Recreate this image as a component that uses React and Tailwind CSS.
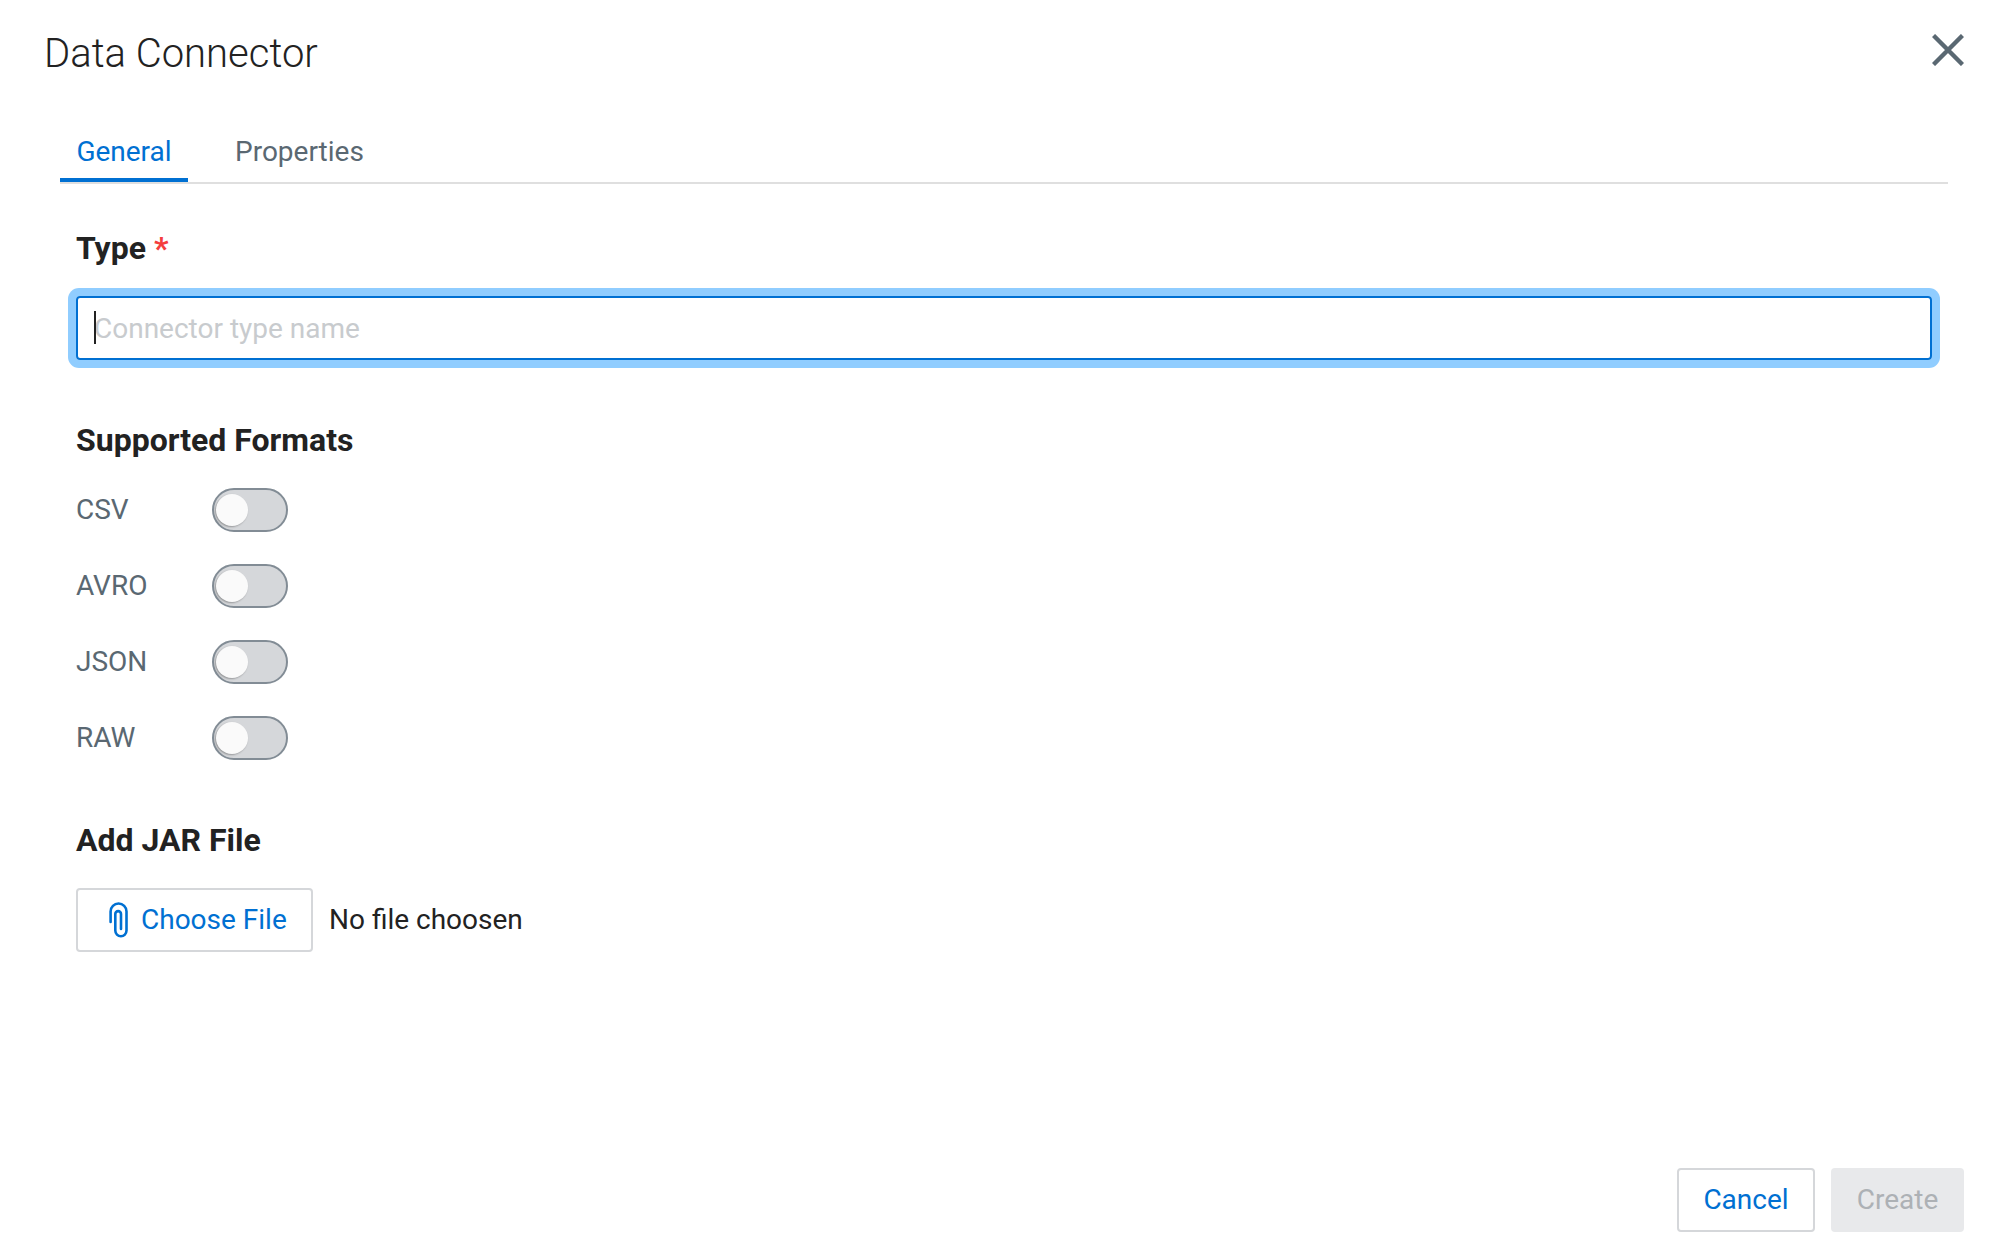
import { useState } from "react";

const FORMATS = ["CSV", "AVRO", "JSON", "RAW"];

function Toggle() {
  return (
    <div className="flex items-center w-[76px] h-[44px] rounded-full border-2 border-[#828c95] bg-[#d5d7da] pl-[2px]">
      <span className="block w-[32px] h-[32px] rounded-full bg-[#fafafa] shadow-[-1px_1px_2px_rgba(0,0,0,0.3)]" />
    </div>
  );
}

function PaperclipIcon() {
  return (
    <svg viewBox="0 0 20 36" className="w-[20px] h-[36px] text-[#0070d2]" fill="none" stroke="currentColor" strokeWidth="2.6" strokeLinecap="round">
      <path d="M1.6 20V9.5a7.95 7.95 0 0 1 15.9 0V28.6a5.6 5.6 0 0 1-11.2 0V12a2.85 2.85 0 0 1 5.7 0V27" />
    </svg>
  );
}

export default function App() {
  const [activeTab, setActiveTab] = useState("General");

  return (
    <div className="flex flex-col h-screen bg-white font-['Roboto',sans-serif] text-[#222]">
      {/* header */}
      <div className="flex items-start justify-between pl-[44px] pr-[42px] pt-[30px] h-[122px]">
        <h1 className="text-[40px] leading-[48px] font-light text-[#222]">Data Connector</h1>
        <button type="button" className="mt-[4px] text-[#5a6872]">
          <svg viewBox="0 0 32 32" className="w-[32px] h-[32px]" stroke="currentColor" strokeWidth="4.4">
            <path d="M1.5 1.5l29 29M30.5 1.5l-29 29" />
          </svg>
        </button>
      </div>

      {/* tabs */}
      <div className="flex gap-[31px] ml-[60px] mr-[58px] h-[62px] border-b-2 border-[#dfdfdf]">
        {["General", "Properties"].map((tab) => (
          <button
            key={tab}
            type="button"
            onClick={() => setActiveTab(tab)}
            className={`h-[60px] min-w-[128px] px-[16px] text-[28px] leading-[60px] border-b-4 ${
              activeTab === tab ? "border-[#0070d2] text-[#0070d2]" : "border-transparent text-[#5a6872]"
            }`}
          >
            {tab}
          </button>
        ))}
      </div>

      <div className="flex flex-col flex-1 pl-[76px] pr-[74px]">
        {/* type */}
        <label className="mt-[45px] text-[32px] leading-[38px] font-bold">
          Type <span className="text-[#f43e3e] font-bold">*</span>
        </label>
        <div className="relative mt-[29px]">
          <input
            readOnly
            placeholder="Connector type name"
            className="w-full h-[64px] px-[16px] rounded-[4px] border-2 border-[#0070d2] text-[28px] outline-none shadow-[0_0_0_8px_#90cdff] placeholder:text-[#c8cbce]"
          />
          <span className="absolute left-[18px] top-[15px] w-[2px] h-[33px] bg-[#222]" />
        </div>

        {/* formats */}
        <h2 className="mt-[61px] text-[32px] leading-[38px] font-bold">Supported Formats</h2>
        <div className="flex flex-col gap-[32px] mt-[29px]">
          {FORMATS.map((format) => (
            <div key={format} className="flex items-center">
              <span className="w-[136px] text-[28px] leading-[44px] text-[#5a6872]">{format}</span>
              <Toggle />
            </div>
          ))}
        </div>

        {/* jar file */}
        <h2 className="mt-[61px] text-[32px] leading-[38px] font-bold">Add JAR File</h2>
        <div className="flex items-center mt-[29px]">
          <button type="button" className="flex items-center gap-[12px] w-[237px] h-[64px] pl-[31px] rounded-[4px] border-2 border-[#d5d7da] text-[28px] text-[#0070d2]">
            <PaperclipIcon />
            Choose File
          </button>
          <span className="ml-[16px] text-[28px]">No file choosen</span>
        </div>
      </div>

      {/* footer */}
      <div className="flex justify-end gap-[16px] pr-[42px] pb-[12px]">
        <button type="button" className="w-[138px] h-[64px] rounded-[4px] border-2 border-[#d5d7da] text-[28px] text-[#0070d2]">
          Cancel
        </button>
        <button type="button" disabled className="w-[133px] h-[64px] rounded-[4px] bg-[#e8e9eb] text-[28px] text-[#adb1b5]">
          Create
        </button>
      </div>
    </div>
  );
}
